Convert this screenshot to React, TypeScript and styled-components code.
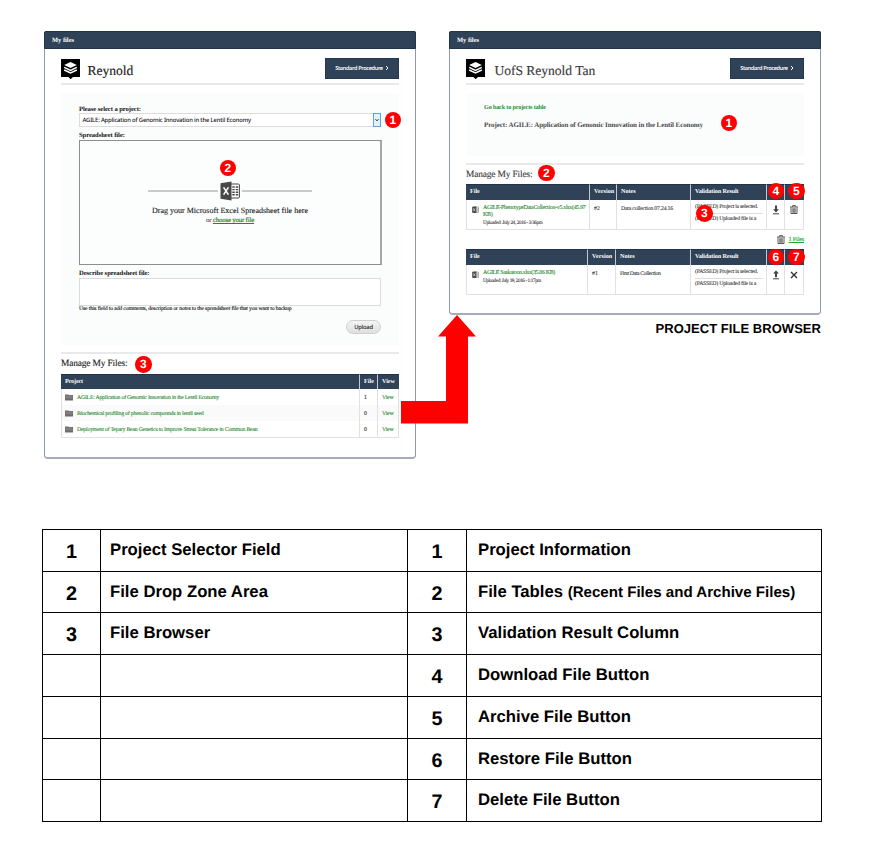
import React from "react";
import styled, { createGlobalStyle, css } from "styled-components";

const SERIF = '"Liberation Serif", "Times New Roman", serif';
const SANS = '"Liberation Sans", Arial, sans-serif';
const UI = '"Noto Sans", "Open Sans", sans-serif';
const NAVY = "#2f4257";
const GREEN = "#1d8a2b";

const type = (size: number, spacing = 0, weight = 400) => css`
  font-size: ${size}px;
  letter-spacing: ${spacing}px;
  font-weight: ${weight};
  white-space: nowrap;
`;

const GlobalStyle = createGlobalStyle`
  * { box-sizing: border-box; }
  body { margin: 0; background: #fff; color: #222; font-family: ${SERIF}; text-rendering: geometricPrecision; }
`;

const Page = styled.main`
  width: 878px;
  height: 863px;
  overflow: hidden;
`;
const Diagrams = styled.section`
  position: relative;
  display: flex;
  align-items: flex-start;
  gap: 33px;
  height: 529px;
  padding: 31px 0 0 44px;
`;
const BrowserColumn = styled.div`
  display: flex;
  flex-direction: column;
`;
const Panel = styled.div<{ $h: number; $ink: string }>`
  width: 372px;
  height: ${p => p.$h}px;
  border: 1px solid #8e9aa7;
  border-bottom-width: 2px;
  border-bottom-color: #a3acb8;
  border-radius: 2px 2px 4px 4px;
  background: #fff;
  color: ${p => p.$ink};
`;
const PanelHeader = styled.div`
  height: 18px;
  margin: -1px -1px 0;
  padding-left: 7px;
  border: 1px solid #22344b;
  border-radius: 2px 2px 0 0;
  background: ${NAVY};
  color: #fff;
  line-height: 17px;
  ${type(6.5, -0.025, 700)}
`;
const PanelBody = styled.div`
  width: 338px;
  margin-left: 16px;
`;
const TitleBar = styled.div`
  display: flex;
  height: 34px;
  padding-top: 9px;
  line-height: 26px;
`;
const LogoSlot = styled.div`
  width: 19px;
  margin-top: 1px;
  line-height: 0;
`;
const Title = styled.h1<{ $gap: number }>`
  flex: 1;
  margin: 0 0 0 ${p => p.$gap}px;
  ${type(13.6, -0.05)}
  -webkit-text-stroke: 0.15px currentColor;
`;
const ProcedureButton = styled.div`
  width: 74px;
  height: 21px;
  padding-bottom: 2px;
  border: 1px solid #24374e;
  background: ${NAVY};
  color: #fff;
  font-family: ${UI};
  display: flex;
  align-items: center;
  justify-content: center;
  gap: 2px;
  ${type(5.6, -0.37, 600)}
`;
const Rule = styled.div`
  height: 2px;
  background: #e8e9ea;
`;
const FormBox = styled.div<{ $h: number; $pad: string }>`
  height: ${p => p.$h}px;
  margin: 9px 0 7px;
  padding: ${p => p.$pad};
  background: #fbfdfd;
`;
const Label = styled.div<{ $h: number; $drop?: number }>`
  height: ${p => p.$h}px;
  padding-top: ${p => p.$drop ?? 0}px;
  line-height: 8px;
  color: #111;
  ${type(6.6, -0.062, 700)}
`;
const Select = styled.div`
  display: flex;
  justify-content: space-between;
  width: 302px;
  height: 14px;
  border: 1px solid #dcdcdc;
  background: #fff;
  padding-left: 2.5px;
  line-height: 12px;
  color: #111;
  font-family: ${UI};
  ${type(5.9, -0.177, 500)}
`;
const SelectArrow = styled.div`
  display: flex;
  align-items: center;
  justify-content: center;
  width: 8px;
  margin: -1px;
  border: 1px solid #5fa2dc;
  background: #e3f1fc;
`;
const DropZone = styled.div`
  width: 303px;
  height: 125px;
  padding-top: 40px;
  border: 1px solid #8d8f8f;
  border-width: 1px 2px 1px 1px;
  border-right-color: #a5a7a7;
  background: #fcfefe;
  text-align: center;
`;
const IconLine = styled.div`
  display: flex;
  align-items: center;
  justify-content: center;
  gap: 2px;
  height: 20px;
  &::before, &::after { content: ""; width: 70px; height: 2px; background: #c9cbcb; }
`;
const DropText = styled.div`
  height: 9px;
  margin-top: 5px;
  line-height: 9px;
  ${type(8, 0.011)}
  -webkit-text-stroke: 0.12px currentColor;
`;
const ChooseText = styled.div`
  height: 9px;
  margin-top: 1px;
  line-height: 9px;
  ${type(6.8, -0.166)}
  span { color: ${GREEN}; text-decoration: underline; -webkit-text-stroke: 0.2px ${GREEN}; }
`;
const TextArea = styled.div`
  width: 302px;
  height: 28px;
  border: 1px solid #dadcdc;
  background: #fff;
`;
const Hint = styled.div`
  height: 7px;
  line-height: 7px;
  color: #111;
  ${type(5.7, -0.131)}
  -webkit-text-stroke: 0.12px currentColor;
`;
const UploadButton = styled.div`
  width: 35px;
  height: 14px;
  margin: 7px 0 0 267px;
  border: 1px solid #cfcfcf;
  border-radius: 7px;
  background: linear-gradient(#f4f4f4, #dfdfdf);
  color: #222;
  line-height: 12px;
  text-align: center;
  font-family: ${UI};
  ${type(5.8, -0.2, 500)}
`;
const SectionHeading = styled.h2<{ $h: number }>`
  height: ${p => p.$h}px;
  margin: 0;
  line-height: 20px;
  ${type(9.4, -0.15)}
  -webkit-text-stroke: 0.12px currentColor;
`;
const Grid = styled.div<{ $cols: string; $rows: string }>`
  display: grid;
  grid-template-columns: ${p => p.$cols};
  grid-template-rows: ${p => p.$rows};
  border: 1px solid #e0e2e4;
  border-width: 0 0 1px 0;
`;
const Head = styled.div<{ $ls?: number }>`
  padding-left: 4px;
  border-right: 1px solid #c3cad1;
  border-top: 1px solid #22344b;
  background: ${NAVY};
  color: #fff;
  line-height: 14px;
  ${p => type(6.2, p.$ls ?? -0.05, 700)}
  &.last { border-right-color: ${NAVY}; }
`;
const Cell = styled.div<{ $striped?: boolean; $first?: boolean; $ls?: number; $top?: number; $left?: number }>`
  display: flex;
  gap: 4px;
  padding: ${p => p.$top ?? 0.5}px 0 0 ${p => p.$left ?? 4}px;
  border-right: 1px solid #dfe1e3;
  box-shadow: ${p => (p.$first ? "inset 1px 0 #e0e2e4" : "none")};
  background: ${p => (p.$striped ? "#fafafa" : "#fff")};
  line-height: 16px;
  ${p => type(5.8, p.$ls ?? -0.2)}
  -webkit-text-stroke: 0.1px currentColor;
`;
const IconSlot = styled.div<{ $top?: number }>`
  flex: none;
  padding-top: ${p => p.$top ?? 4}px;
  line-height: 0;
`;
const ProjectLink = styled.span<{ $ls: number }>`
  color: ${GREEN};
  letter-spacing: ${p => p.$ls}px;
`;
const FileMeta = styled.div`
  line-height: 7px;
`;
const FileName = styled.div<{ $ls: number }>`
  color: ${GREEN};
  ${p => type(6, p.$ls)}
`;
const Uploaded = styled.div<{ $ls: number }>`
  line-height: 8px;
  ${p => type(5.2, p.$ls)}
`;
const Results = styled.div`
  width: 68px;
  line-height: 9px;
`;
const Result = styled.div<{ $ls: number }>`
  height: 10px;
  letter-spacing: ${p => p.$ls}px;
  & + & { height: 12px; border-top: 1px solid #dcdcdc; padding-top: 1px; }
`;
const ArchiveBar = styled.div`
  display: flex;
  justify-content: flex-end;
  align-items: center;
  gap: 4px;
  height: 19px;
`;
const ArchiveLink = styled.span`
  color: #22a83a;
  text-decoration: underline;
  ${type(6.2, -0.17)}
  -webkit-text-stroke: 0.15px currentColor;
`;
const BackLink = styled.div`
  color: ${GREEN};
  line-height: 8px;
  ${type(6.2, -0.176, 700)}
`;
const ProjectLine = styled.div`
  margin-top: 9px;
  color: #4a4a4a;
  line-height: 8px;
  ${type(7, -0.088, 700)}
`;
const Caption = styled.div`
  margin-top: 6px;
  text-align: right;
  line-height: 16px;
  color: #000;
  font-family: ${SANS};
  ${type(13, 0.041, 700)}
`;
const Marker = styled.div<{ $x: number; $y: number }>`
  position: absolute;
  left: ${p => p.$x - 8.5}px;
  top: ${p => p.$y - 8.5}px;
  width: 16.5px;
  height: 16.5px;
  border-radius: 50%;
  background: #fe0000;
  color: #fff;
  line-height: 16.5px;
  text-align: center;
  font-family: ${SANS};
  ${type(12, 0, 700)}
`;
const FlowArrow = styled.svg`
  position: absolute;
  left: 401px;
  top: 315px;
`;
const Legend = styled.div`
  display: grid;
  grid-template-columns: 58px 307px 59px 355px;
  grid-template-rows: 42px 41px 42px 42px 42px 41px 42px;
  width: 780px;
  margin-left: 42px;
  border: solid #000;
  border-width: 1px 0 0 1px;
  color: #000;
  font-family: ${SANS};
`;
const LegendNumber = styled.div`
  border: solid #000;
  border-width: 0 1px 1px 0;
  text-align: center;
  line-height: 44px;
  ${type(19.8, 0, 700)}
`;
const LegendName = styled.div<{ $pad: number }>`
  border: solid #000;
  border-width: 0 1px 1px 0;
  padding-left: ${p => p.$pad}px;
  line-height: 39px;
  ${type(16.7, 0, 700)}
  small { font-size: 15.1px; }
`;

const LayersLogo = () => (
  <svg width="19" height="20" viewBox="0 0 19 20">
    <path d="M0 0H19V18H12L9.7 20.2 7.3 18H0Z" fill="#000" />
    <path d="M9.5 3 15.8 6 9.5 9 3.2 6Z" fill="#fff" />
    <path d="M3.2 8.4 9.5 11.4 15.8 8.4M3.2 11 9.5 14 15.8 11" fill="none" stroke="#fff" strokeWidth="1.4" />
  </svg>
);
const ExcelIcon = ({ w }: { w: number }) => (
  <svg width={w} height={w} viewBox="0 0 20 20">
    <rect x="10" y="3" width="9.4" height="14" rx="1" fill="#fff" stroke="#444" />
    <path d="M12.3 6h2.4M15.8 6h2.4M12.3 8.6h2.4M15.8 8.6h2.4M12.3 11.2h2.4M15.8 11.2h2.4M12.3 13.8h2.4M15.8 13.8h2.4" stroke="#444" strokeWidth="1.4" />
    <path d="M.5 2.3 11.5.5V19.5L.5 17.7Z" fill="#484848" />
    <path d="M3.6 6.4 8.4 13.6M8.4 6.4 3.6 13.6" stroke="#fff" strokeWidth="1.6" />
  </svg>
);
const FolderIcon = () => (
  <svg width="8" height="7" viewBox="0 0 8 7">
    <path d="M0 .5H3.2L4 .9H8V6.5H0Z" fill="#6c6c6c" />
    <path d="M.5 2.2H7.5M.5 3.8H7.5" stroke="#aaa" strokeWidth=".5" />
  </svg>
);
const TrashIcon = () => (
  <svg width="8" height="9" viewBox="0 0 8 9">
    <path d="M0 2H8M2.6 1.8V.6H5.4V1.8M1 2.5V8.5H7V2.5M2.9 3.2V7.8M4 3.2V7.8M5.1 3.2V7.8" fill="none" stroke="#444" strokeWidth=".9" />
  </svg>
);
const TransferIcon = ({ up }: { up?: boolean }) => (
  <svg width="8" height="10" viewBox="0 0 8 10">
    <path d={up ? "M4 .5 7 3.6H5V7.3H3V3.6H1Z" : "M3 .5H5V4.3H7L4 7.4 1 4.3H3Z"} fill="#444" />
    <path d="M1 8.8H7" stroke="#444" strokeWidth="1" />
  </svg>
);
const CrossIcon = () => (
  <svg width="8" height="10" viewBox="0 0 8 10">
    <path d="M1 2 7 8M7 2 1 8" stroke="#333" strokeWidth="1.4" />
  </svg>
);
const Chevron = ({ down }: { down?: boolean }) => (
  <svg width="4" height="4" viewBox="0 0 4 4">
    <path d={down ? "M.5 1.2 2 2.8 3.5 1.2" : "M1 0 3 2 1 4"} fill="none" stroke={down ? "#222" : "#fff"} strokeWidth="1" />
  </svg>
);

const PanelTop = ({ title, gap }: { title: string; gap: number }) => (
  <>
    <TitleBar>
      <LogoSlot><LayersLogo /></LogoSlot>
      <Title $gap={gap}>{title}</Title>
      <ProcedureButton>Standard Procedure <Chevron /></ProcedureButton>
    </TitleBar>
    <Rule />
  </>
);

const projects = [
  { name: "AGILE: Application of Genomic Innovation in the Lentil Economy", ls: -0.234, files: "1" },
  { name: "Biochemical profiling of phenolic compounds in lentil seed", ls: -0.198, files: "0" },
  { name: "Deployment of Tepary Bean Genetics to Improve Stress Tolerance in Common Bean", ls: -0.204, files: "0" },
];

const ProjectTable = () => (
  <Grid $cols="299px 18px 21px" $rows="15px 16px 16px 16px">
    <Head $ls={-0.16}>Project</Head>
    <Head $ls={0}>File</Head>
    <Head className="last">View</Head>
    {projects.map((p, i) => (
      <React.Fragment key={p.name}>
        <Cell $first $striped={i === 1}>
          <IconSlot><FolderIcon /></IconSlot>
          <ProjectLink $ls={p.ls}>{p.name}</ProjectLink>
        </Cell>
        <Cell $striped={i === 1}>{p.files}</Cell>
        <Cell $striped={i === 1}><ProjectLink $ls={-0.18}>View</ProjectLink></Cell>
      </React.Fragment>
    ))}
  </Grid>
);

type FileRow = {
  cols: string; name: string[]; nameLs: number; uploaded: string; upLs: number;
  version: string; note: string; noteLs: number; actions: React.ReactNode[];
};
const FileTable = ({ row }: { row: FileRow }) => (
  <Grid $cols={row.cols} $rows="16px 29px">
    <Head>File</Head>
    <Head $ls={0.03}>Version</Head>
    <Head>Notes</Head>
    <Head $ls={-0.128}>Validation Result</Head>
    <Head />
    <Head className="last" />
    <Cell $first $top={4.5} $left={5.5}>
      <IconSlot $top={1}><ExcelIcon w={7.5} /></IconSlot>
      <FileMeta>
        {row.name.map(n => <FileName key={n} $ls={row.nameLs}>{n}</FileName>)}
        <Uploaded $ls={row.upLs}>{row.uploaded}</Uploaded>
      </FileMeta>
    </Cell>
    <Cell $ls={0}>{row.version}</Cell>
    <Cell $ls={row.noteLs}>{row.note}</Cell>
    <Cell $top={3}>
      <Results>
        <Result $ls={-0.23}>(PASSED) Project is selected.</Result>
        <Result $ls={-0.238}>(PASSED) Uploaded file is a</Result>
      </Results>
    </Cell>
    {row.actions.map((a, i) => (
      <Cell key={i} $left={5}><IconSlot>{a}</IconSlot></Cell>
    ))}
  </Grid>
);

const recent: FileRow = {
  cols: "124px 27px 74px 76px 18px 19px",
  name: ["AGILE-PhenotypeDataCollection-v5.xlsx(45.97", "KB)"], nameLs: -0.329,
  uploaded: "Uploaded: July 24, 2016 - 3:36pm", upLs: -0.365,
  version: "#2", note: "Data collection 07.24.16", noteLs: -0.208,
  actions: [<TransferIcon />, <TrashIcon />],
};
const archived: FileRow = {
  cols: "122px 28px 75px 76px 18px 19px",
  name: ["AGILE Saskatoon.xlsx(35.86 KB)"], nameLs: -0.367,
  uploaded: "Uploaded: July 19, 2016 - 1:17pm", upLs: -0.412,
  version: "#1", note: "First Data Collection", noteLs: -0.387,
  actions: [<TransferIcon up />, <CrossIcon />],
};

const legend: [string, string, string, React.ReactNode][] = [
  ["1", "Project Selector Field", "1", "Project Information"],
  ["2", "File Drop Zone Area", "2", <>File Tables <small>(Recent Files and Archive Files)</small></>],
  ["3", "File Browser", "3", "Validation Result Column"],
  ["", "", "4", "Download File Button"],
  ["", "", "5", "Archive File Button"],
  ["", "", "6", "Restore File Button"],
  ["", "", "7", "Delete File Button"],
];

const markers: [number, number, string][] = [
  [393, 120, "1"], [228, 168, "2"], [143.5, 364.5, "3"],
  [729, 123, "1"], [546.5, 173, "2"], [704.5, 213.5, "3"],
  [776, 191, "4"], [796.5, 191, "5"], [776, 257, "6"], [796.5, 257, "7"],
];

export default function App() {
  return (
    <Page>
      <GlobalStyle />
      <Diagrams>
        <Panel $h={428} $ink="#222">
          <PanelHeader>My files</PanelHeader>
          <PanelBody>
            <PanelTop title="Reynold" gap={7.5} />
            <FormBox $h={251} $pad="11px 0 0 18px">
              <Label $h={8} $drop={0.5}>Please select a project:</Label>
              <Select>
                AGILE: Application of Genomic Innovation in the Lentil Economy
                <SelectArrow><Chevron down /></SelectArrow>
              </Select>
              <Label $h={13} $drop={5}>Spreadsheet file:</Label>
              <DropZone>
                <IconLine><ExcelIcon w={20} /></IconLine>
                <DropText>Drag your Microsoft Excel Spreadsheet file here</DropText>
                <ChooseText>or <span>choose your file</span></ChooseText>
              </DropZone>
              <Label $h={13} $drop={5}>Describe spreadsheet file:</Label>
              <TextArea />
              <Hint>Use this field to add comments, description or notes to the spreadsheet file that you want to backup</Hint>
              <UploadButton>Upload</UploadButton>
            </FormBox>
            <Rule />
            <SectionHeading $h={20}>Manage My Files:</SectionHeading>
            <ProjectTable />
          </PanelBody>
        </Panel>
        <BrowserColumn>
          <Panel $h={284} $ink="#3c3c3c">
            <PanelHeader>My files</PanelHeader>
            <PanelBody>
              <PanelTop title="UofS Reynold Tan" gap={9.5} />
              <FormBox $h={62} $pad="10px 0 0 18px">
                <BackLink>Go back to projects table</BackLink>
                <ProjectLine>Project: AGILE: Application of Genomic Innovation in the Lentil Economy</ProjectLine>
              </FormBox>
              <Rule />
              <SectionHeading $h={19}>Manage My Files:</SectionHeading>
              <FileTable row={recent} />
              <ArchiveBar><TrashIcon /><ArchiveLink>1 Files</ArchiveLink></ArchiveBar>
              <FileTable row={archived} />
            </PanelBody>
          </Panel>
          <Caption>PROJECT FILE BROWSER</Caption>
        </BrowserColumn>
        <FlowArrow width="76" height="109" viewBox="0 0 76 109">
          <path d="M56 0 75 21.5H67V108.5H0V86H45V21.5H37Z" fill="#fe0000" />
        </FlowArrow>
        {markers.map(([x, y, n]) => <Marker key={`${x}-${y}`} $x={x} $y={y}>{n}</Marker>)}
      </Diagrams>
      <Legend>
        {legend.map(([a, left, b, right]) => (
          <React.Fragment key={b}>
            <LegendNumber>{a}</LegendNumber>
            <LegendName $pad={9}>{left}</LegendName>
            <LegendNumber>{b}</LegendNumber>
            <LegendName $pad={11}>{right}</LegendName>
          </React.Fragment>
        ))}
      </Legend>
    </Page>
  );
}
